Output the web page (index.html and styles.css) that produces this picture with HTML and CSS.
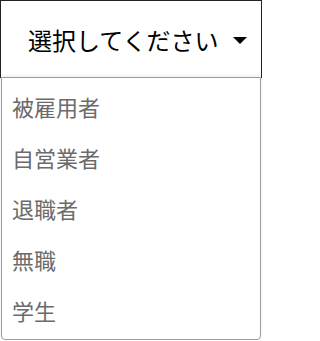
FILE: index.html
```html
<!DOCTYPE html>
<html lang="ja">
<head>
<meta charset="utf-8">
<link rel="stylesheet" href="styles.css">
</head>
<body>
<div class="select">
  <div class="trigger">
    <span class="label">選択してください</span>
    <svg class="arrow" width="14" height="7" viewBox="0 0 14 7"><path d="M0 0H14L7 7Z" fill="#000"/></svg>
  </div>
  <ul class="menu">
    <li>被雇用者</li>
    <li>自営業者</li>
    <li>退職者</li>
    <li>無職</li>
    <li>学生</li>
  </ul>
</div>
</body>
</html>
```
FILE: styles.css
```css
html, body {
  margin: 0;
  padding: 0;
  background: #fff;
}
body {
  font-family: "Noto Sans CJK JP", "Noto Sans", sans-serif;
}
.select {
  width: 262px;
  position: relative;
}
.trigger {
  box-sizing: border-box;
  height: 78px;
  border: 1px solid #222;
  border-bottom: none;
  display: flex;
  align-items: center;
  justify-content: space-between;
  padding: 0 14px 0 27px;
}
.label {
  font-size: 24px;
  color: #000;
  line-height: 1;
}
.arrow {
  display: block;
  margin-bottom: -2px;
}
.menu {
  list-style: none;
  margin: -1px 1px 0;
  padding: 2px 0 4px;
  border: 1px solid #9c9c9c;
  border-radius: 0 0 4px 4px;
  box-shadow: 0 -2px 3px rgba(0, 0, 0, 0.06);
  position: relative;
  background: #fff;
}
.menu li {
  height: 51px;
  display: flex;
  align-items: center;
  padding-left: 10px;
  font-size: 22px;
  color: #6b6b6b;
}
```
